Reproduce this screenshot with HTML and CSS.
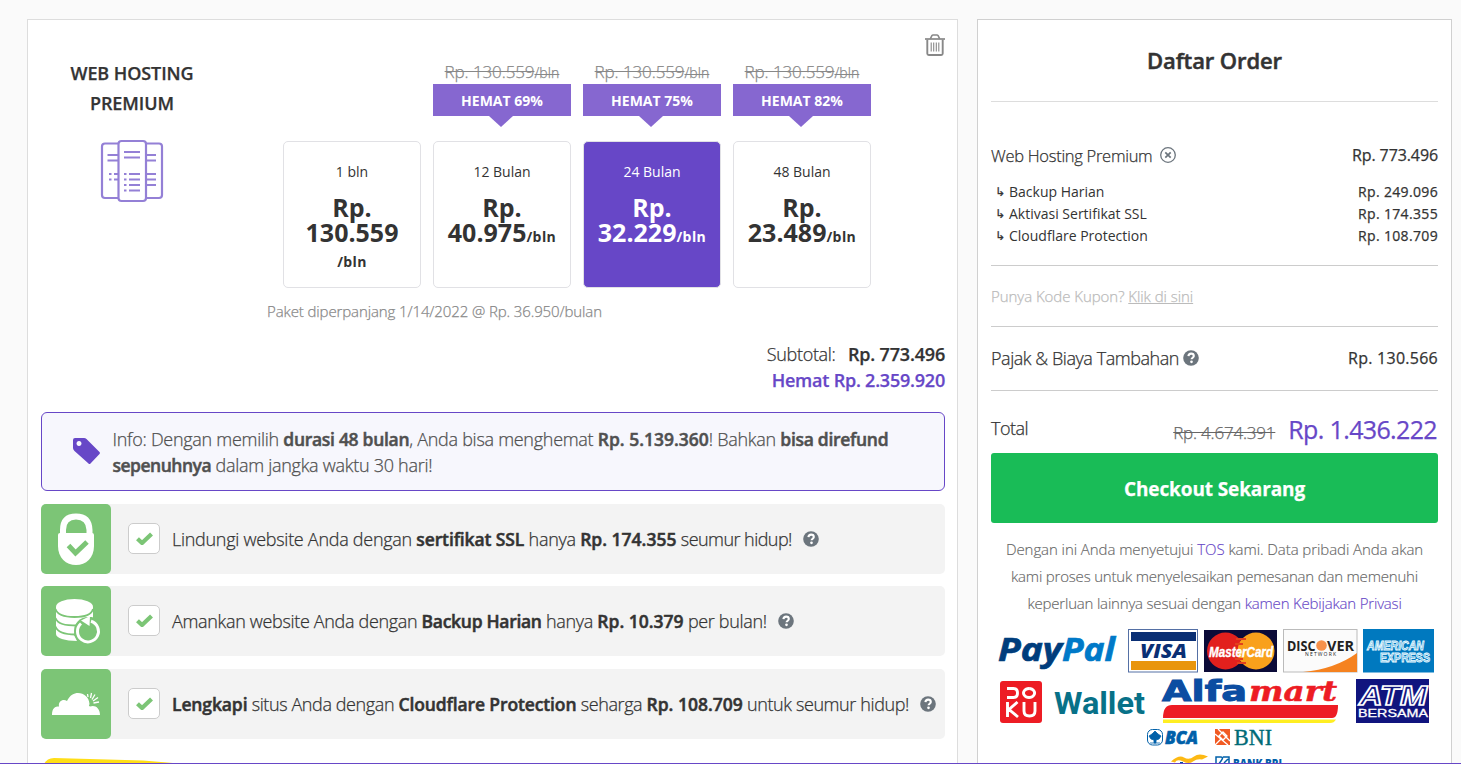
FILE: index.html
```
<!DOCTYPE html>
<html lang="id">
<head>
<meta charset="utf-8">
<title>Daftar Order</title>
<link rel="stylesheet" href="styles.css">
</head>
<body>
<svg class="defs" aria-hidden="true">
  <symbol id="help" viewBox="0 0 16 16"><circle cx="8" cy="8" r="7.8" fill="#6c757d"/><path d="M5.400 6.200C5.600 4.300 6.700 3.600 8.100 3.600c1.500 0 2.700.9 2.700 2.300 0 1.700-2.200 1.900-2.200 3.400" fill="none" stroke="#fff" stroke-width="2.100"/><circle cx="8.500" cy="11.800" r="1.350" fill="#fff"/></symbol>
  <symbol id="check" viewBox="0 0 16 12"><path d="M1.400 6.200l4.300 4L14.600 1.800" fill="none" stroke="#7cc576" stroke-width="4"/></symbol>
</svg>
<main class="page">
  <section class="card product">
    <div class="top">
      <div class="name">
        <h2>WEB HOSTING<br><span>PREMIUM</span></h2>
        <svg width="64" height="64" viewBox="0 0 64 64" fill="none" stroke="#9480d6" stroke-width="2.200">
          <path d="M18 4.500H5Q2 4.500 2 7.500V56q0 3 3 3H18M46 4.500H59q3 0 3 3V56q0 3-3 3H46"/>
          <rect x="18.500" y="2" width="27.500" height="60" rx="3"/>
          <path d="M24 13h16M24 18.500h16M7.500 16H18M7.500 21.500H18M46 16h10M46 21.500h10M29 35h11M29 40.500h11M29 46h11M29 51.500h11M46 35h10M46 40.500h10M46 46h10M14 35h4M14 40.500h4M9 35h2.500M9 40.500h2.500M24 35h2.500M24 40.500h2.500M24 46h2.500M24 51.500h2.500"/>
        </svg>
      </div>
      <div class="periods">
        <div class="plans">
          <div class="plan">
            <div class="box"><p>1 bln</p><b>Rp.<br>130.559<br><small>/bln</small></b></div>
          </div>
          <div class="plan">
            <s>Rp. 130.559<small>/bln</small></s>
            <div class="save">HEMAT 69%</div>
            <div class="box"><p>12 Bulan</p><b>Rp.<br>40.975<small>/bln</small></b></div>
          </div>
          <div class="plan">
            <s>Rp. 130.559<small>/bln</small></s>
            <div class="save">HEMAT 75%</div>
            <div class="box selected"><p>24 Bulan</p><b>Rp.<br>32.229<small>/bln</small></b></div>
          </div>
          <div class="plan">
            <s>Rp. 130.559<small>/bln</small></s>
            <div class="save">HEMAT 82%</div>
            <div class="box"><p>48 Bulan</p><b>Rp.<br>23.489<small>/bln</small></b></div>
          </div>
        </div>
        <p class="renew">Paket diperpanjang 1/14/2022 @ Rp. 36.950/bulan</p>
      </div>
      <svg class="trash" width="20" height="22" viewBox="0 0 20 22" fill="none" stroke="#888">
        <path d="M0 5h20" stroke-width="1.700"/><path d="M5.300 4.800L7 1.500Q7.400 1 8 1h4q.6 0 1 .5l1.700 3.300" stroke-width="1.600"/>
        <path d="M2.300 5.500V19.500Q2.300 21 3.800 21H16.200q1.500 0 1.500-1.500V5.500" stroke-width="1.900"/><path d="M6.200 8.500v9M8.700 8.500v9M11.300 8.500v9M13.800 8.500v9" stroke-width="1.100"/>
      </svg>
    </div>
    <div class="subtotal">
      <p>Subtotal: <b>Rp. 773.496</b></p>
      <p class="saved">Hemat Rp. 2.359.920</p>
    </div>
    <div class="info">
      <svg width="28" height="28" viewBox="0 0 28 28"><path fill="#6747c7" fill-rule="evenodd" d="M0 3Q0 1 2 1H11q1.500 0 2.500 1L26.500 15q1 1 0 2L17.500 26.500q-1 1-2 0L1.500 14Q0 12.500 0 11zM6 4a2.500 2.500 0 1 0 .01 0z"/></svg>
      <p>Info: Dengan memilih <b>durasi 48 bulan</b>, Anda bisa menghemat <b class="num">Rp. 5.139.360</b>! Bahkan <b>bisa direfund</b><br><b class="tight">sepenuhnya</b> dalam jangka waktu 30 hari!</p>
    </div>
    <div class="addons">
      <div class="addon">
        <div class="tile"><svg width="70" height="70" viewBox="0 0 70 70"><path d="M22 30V26Q22 12.500 35 12.500T48.500 26v4" fill="none" stroke="#fff" stroke-width="6"/><path d="M19 29h32q2 0 2 2V42c0 12-8 19-18 19S17 54 17 42V31q0-2 2-2z" fill="#fff"/><path d="M27.500 41.500l7 7.500L46 38" fill="none" stroke="#7cc576" stroke-width="5"/></svg></div>
        <span class="cb"><svg width="17" height="13"><use href="#check"/></svg></span>
        <p>Lindungi website Anda dengan <b class="wide">sertifikat SSL</b> hanya <b class="num">Rp. 174.355</b> <span class="close">seumur hidup!</span></p>
        <svg class="help" width="16" height="16"><use href="#help"/></svg>
      </div>
      <div class="addon">
        <div class="tile"><svg width="70" height="70" viewBox="0 0 70 70"><path d="M15 21V48c0 4 9 7 21 7l-3-6 2-11 12-7 5 0V21z" fill="#fff"/><ellipse cx="33.500" cy="21" rx="18.500" ry="8" fill="#fff"/><path d="M14.500 23c2 6.500 10 8 19 8s17-1.500 18.500-8M14.500 32c2 6 9 7.500 22 7.500M14.500 40.500c2 6 9 8 20 8" fill="none" stroke="#7cc576" stroke-width="1.800"/><circle cx="47" cy="45" r="14" fill="#7cc576"/><path d="M40 37.500A10.500 10.500 0 1 0 50 35.300" fill="none" stroke="#fff" stroke-width="3"/><path d="M40 34.500l9-4.500-.5 10z" fill="#fff"/><path d="M48 29.500l4-2v4z" fill="#fff"/></svg></div>
        <span class="cb"><svg width="17" height="13"><use href="#check"/></svg></span>
        <p class="snug">Amankan website Anda dengan <b>Backup Harian</b> hanya <b class="num">Rp. 10.379</b> per bulan!</p>
        <svg class="help" width="16" height="16"><use href="#help"/></svg>
      </div>
      <div class="addon">
        <div class="tile"><svg width="70" height="70" viewBox="0 0 70 70"><path fill="#fff" d="M11 46c0-7 3-8.500 7-8.500-1-5 4-8 8-5.500C29 26 33 24 37 24c6 0 11 4 11.500 11-.5 1.500-1 2 .5 2.500 5-2 10 1.500 10 8.500z"/><path d="M47 28l-.5-3M49.500 29l1-5M51 30.500l3-5M52 32l5-3.500M52.500 34l5.500-1" stroke="#fff" stroke-width="1.300"/></svg></div>
        <span class="cb"><svg width="17" height="13"><use href="#check"/></svg></span>
        <p class="snugger"><b class="wide">Lengkapi</b> situs Anda dengan <b class="wide">Cloudflare Protection</b> seharga <b class="num">Rp. 108.709</b> untuk seumur hidup!</p>
        <svg class="help" width="16" height="16"><use href="#help"/></svg>
      </div>
    </div>
    <svg class="promo" width="160" height="30" viewBox="0 0 160 30"><path fill="#ffde17" d="M0 8Q3 0 11 0L100 2.500 130 5 160 8V30H0z"/></svg>
  </section>

  <aside class="card order">
    <h1>Daftar Order</h1>
    <div class="items">
      <div class="row item"><span>Web Hosting Premium</span><svg width="16" height="16" viewBox="0 0 16 16" fill="none" stroke="#6c757d"><circle cx="8" cy="8" r="7.300" stroke-width="1.300"/><path d="M5.300 5.300l5.400 5.400M10.700 5.300l-5.400 5.400" stroke-width="1.700"/></svg><b>Rp. 773.496</b></div>
      <div class="subs">
        <div class="row"><i>↳</i><span>Backup Harian</span><b>Rp. 249.096</b></div>
        <div class="row"><i>↳</i><span>Aktivasi Sertifikat SSL</span><b>Rp. 174.355</b></div>
        <div class="row"><i>↳</i><span>Cloudflare Protection</span><b>Rp. 108.709</b></div>
      </div>
    </div>
    <div class="row coupon"><span>Punya Kode Kupon? <u>Klik di sini</u></span></div>
    <div class="row tax"><span>Pajak &amp; Biaya Tambahan</span><svg width="16" height="16"><use href="#help"/></svg><b>Rp. 130.566</b></div>
    <div class="total"><span>Total</span><s>Rp. 4.674.391</s><strong>Rp. 1.436.222</strong></div>
    <button class="checkout">Checkout Sekarang</button>
    <p class="tos"><span>Dengan ini Anda menyetujui <a>TOS</a> kami. Data pribadi Anda akan</span><br>kami proses untuk menyelesaikan pemesanan dan memenuhi<br>keperluan lainnya sesuai dengan <a>kamen Kebijakan Privasi</a></p>
    <svg class="pay" width="447" height="145" viewBox="991 627 447 145">
      <defs><clipPath id="mc"><rect x="1204" y="630" width="73" height="42"/></clipPath></defs>
      <g font-family="Open Sans, sans-serif" font-weight="700" font-style="italic" stroke-width=".7">
        <text x="998" y="661" font-size="33" fill="#003d7c" stroke="#003d7c" textLength="64" lengthAdjust="spacingAndGlyphs">Pay</text>
        <text x="1062" y="661" font-size="33" fill="#0079c8" stroke="#0079c8" textLength="53" lengthAdjust="spacingAndGlyphs">Pal</text>
      </g>
      <rect x="1128.500" y="629.500" width="69" height="42.500" fill="#fff" stroke="#5570a5"/>
      <rect x="1131" y="632" width="65" height="9" fill="#0a2f74"/><rect x="1131" y="661" width="65" height="9" fill="#e9950c"/>
      <text x="1140" y="658" font-family="Open Sans, sans-serif" font-weight="800" font-style="italic" font-size="20" fill="#0a2f74" textLength="47" lengthAdjust="spacingAndGlyphs">VISA</text>
      <rect x="1204" y="630" width="73" height="42" fill="#0b0b38"/>
      <g clip-path="url(#mc)"><circle cx="1225.500" cy="651" r="18.500" fill="#e2201d"/><circle cx="1256" cy="651" r="18.500" fill="#f9a01b"/><path d="M1236 639h10M1235 644h8M1235 659h8M1237 663h9" stroke="#e2401d" stroke-width="2"/></g>
      <text x="1209" y="657" font-family="Liberation Sans, sans-serif" font-weight="700" font-style="italic" font-size="14" fill="#fff" stroke="#fff" stroke-width=".4" textLength="64" lengthAdjust="spacingAndGlyphs">MasterCard</text>
      <rect x="1283.500" y="629.500" width="73.500" height="42.500" fill="#fbfbfb" stroke="#bbb"/>
      <path d="M1303 672Q1335 669 1357 653V672z" fill="#f58220"/>
      <circle cx="1321.500" cy="645.500" r="5.300" fill="#f7914a"/>
      <g font-family="Open Sans, sans-serif" font-weight="700" fill="#222"><text x="1287" y="650.500" font-size="14.500" textLength="28.500" lengthAdjust="spacingAndGlyphs">DISC</text><text x="1327" y="650.500" font-size="14.500" textLength="27" lengthAdjust="spacingAndGlyphs">VER</text><text x="1305" y="656" font-size="5" font-weight="400" textLength="31">NETWORK</text></g>
      <rect x="1363" y="629" width="71" height="43.500" fill="#0079bf"/>
      <g font-family="Liberation Sans, sans-serif" font-weight="700" font-size="12" fill="#58b4e2" stroke="#eefaff" stroke-width=".8"><text x="1367" y="650" font-style="italic" textLength="57" lengthAdjust="spacingAndGlyphs">AMERICAN</text><text x="1380" y="662" textLength="50" lengthAdjust="spacingAndGlyphs">EXPRESS</text></g>
      <rect x="1000" y="681" width="42" height="42" rx="3" fill="#ed1c24"/>
      <path d="M1007 688.500h6.500q4 0 4 4.500t-4 4.500h-6.500M1029 688.500a5.500 4.500 0 1 0 .1 0M1007.500 702v15M1017.500 702l-8.500 7.500 9 7.500M1024 702v9q0 5 5.500 5t5.500-5V702" fill="none" stroke="#fff" stroke-width="2.900"/>
      <text x="1054" y="714" font-family="Roboto, sans-serif" font-weight="700" font-size="32" fill="#087188" textLength="91" lengthAdjust="spacingAndGlyphs">Wallet</text>
      <g font-family="DejaVu Sans, sans-serif" font-weight="700"><text x="1162" y="700.500" font-size="28" fill="#0b4da2" stroke="#0b4da2" textLength="85" lengthAdjust="spacingAndGlyphs">Alfa</text><text x="1249" y="700.500" font-size="28" font-family="DejaVu Serif, serif" font-style="italic" fill="#ed1c24" stroke="#ed1c24" stroke-width=".5" textLength="88" lengthAdjust="spacingAndGlyphs">mart</text></g>
      <path d="M1163 718q0-13 9-13H1338q0 13-6 13z" fill="#ed1c24"/><path d="M1163 719.500H1336q-2 3.500-6 3.500H1163z" fill="#ffee22"/>
      <rect x="1356" y="679" width="73" height="44" fill="#10147e"/>
      <text x="1359" y="705" font-family="Liberation Sans, sans-serif" font-weight="700" font-style="italic" font-size="27" fill="#10147e" stroke="#fff" stroke-width="1.600" textLength="68" lengthAdjust="spacingAndGlyphs">ATM</text>
      <text x="1358" y="717" font-family="Liberation Sans, sans-serif" font-size="11.500" fill="#fff" stroke="#fff" stroke-width=".3" textLength="70" lengthAdjust="spacingAndGlyphs">BERSAMA</text>
      <rect x="1147.500" y="729.500" width="15" height="15.500" rx="5" fill="#fff" stroke="#0060a9"/><path d="M1155 731l3 3 3 2-2 3-3 1v3h-2v-3l-3-1-2-3 3-2zM1150 743h10" fill="#0060a9" stroke="#0060a9" stroke-width=".8"/>
      <text x="1165" y="744" font-family="Open Sans, sans-serif" font-weight="800" font-style="italic" font-size="18" fill="#0060a9" stroke="#0060a9" stroke-width=".6" textLength="33" lengthAdjust="spacingAndGlyphs">BCA</text>
      <rect x="1215" y="729" width="15" height="16" fill="#f15a23"/><path d="M1215 734l13 11M1218 729l12 12M1215 745l6-6M1223 732l4 4-4 4-4-4z" fill="none" stroke="#fff" stroke-width="1.300"/>
      <text x="1234" y="744.500" font-family="Liberation Serif, serif" font-size="23" fill="#006b77" stroke="#006b77" stroke-width=".4" textLength="38" lengthAdjust="spacingAndGlyphs">BNI</text>
      <path d="M1171 761.500q8-7 13-4t10-1 14 0l-6 3q-5-1-9 2t-10 0-8 1z" fill="#fdb913"/><path d="M1180 762h3v3h-3z" fill="#00529b"/>
      <path d="M1216 765v-8h5q3 0 0 4l-3 4M1223 757h6v8M1224 763l4-4" fill="none" stroke="#0060a9" stroke-width="1.500"/>
      <text x="1233" y="768" font-family="Open Sans, sans-serif" font-weight="800" font-size="11.500" fill="#0060a9" textLength="49" lengthAdjust="spacingAndGlyphs">BANK BRI</text>
    </svg>
  </aside>
</main>
<div class="edge"></div>
</body>
</html>
```
FILE: styles.css
```
*{box-sizing:border-box}
body{margin:0;height:764px;overflow:hidden;background:#fafafa;color:#333;font-family:"Open Sans","Noto Sans",sans-serif;font-weight:300;-webkit-text-stroke:.25px}
p,h1,h2{margin:0}
svg{display:block;flex:none;-webkit-text-stroke:0}
.defs{position:absolute;width:0;height:0}
.page{display:grid;grid-template-columns:931px 475px;gap:19px;padding:19px 0 0 27px;height:764px}
.card{background:#fff;border:1px solid #ddd;border-bottom:0;padding:0 13px;overflow:hidden;height:745px}
.product{padding-right:12px}
.order{border-color:#d0d0d0}
.edge{position:fixed;left:0;right:0;bottom:0;height:1px;background:#6747c7}

.top{display:flex;height:322px}
.name{width:182px;padding-top:38px;display:flex;flex-direction:column;align-items:center;gap:21px}
.name h2{font-size:18px;line-height:30px;font-weight:600;text-align:center;letter-spacing:-.09px}
.periods{flex:1;padding-left:60px;padding-top:40px}
.plans{display:grid;grid-template-columns:repeat(4,138px);gap:12px;height:228px}
.plan{display:flex;flex-direction:column;text-align:center}
.plan s{height:24px;font-size:17px;line-height:24px;color:#888;letter-spacing:-.1px}
.plan s small{font-size:14px;letter-spacing:.1px}
.save{position:relative;height:32px;background:#8667d0;color:#fff;font-size:14px;line-height:33px;font-weight:700;-webkit-text-stroke:0}
.save::after{content:"";position:absolute;left:56px;top:32px;border:solid transparent;border-width:11.500px 12.500px 0;border-top-color:#8667d0}
.box{margin-top:auto;height:147px;border:1px solid #e1e1e5;border-radius:5px;padding-top:19px;-webkit-text-stroke:0}
.box p{font-size:14px;line-height:22px;font-weight:400}
.box b{display:block;margin-top:12px;font-size:25px;line-height:25px;font-weight:700;white-space:nowrap}
.box small{font-size:14px;letter-spacing:.4px}
.selected{background:#6747c7;color:#fff}
.renew{margin:10px 0 0 -16px;font-size:15px;line-height:26px;color:#888;letter-spacing:-.11px;white-space:nowrap}
.trash{margin-top:14px}

.subtotal{margin-top:-1px;text-align:right;font-size:18px;line-height:26px;letter-spacing:-.3px}
.subtotal b{font-weight:600;margin-left:8px;letter-spacing:-.18px}
.subtotal .saved{font-weight:600;color:#6747c7;letter-spacing:-.22px}
.info{margin-top:19px;height:79px;border:1px solid #6747c7;border-radius:6px;background:#f7f7fd;color:#505050;display:flex;padding:13px 0 0 31px;gap:11.500px}
.info svg{margin-top:11px}
.info p,.addon p{font-size:18px;line-height:26px;letter-spacing:-.28px;white-space:nowrap}
.info b,.addon b{font-size:17.500px;font-weight:600;letter-spacing:-.3px;-webkit-text-stroke:.5px}
.info .num,.addon .num{letter-spacing:0}
.info .tight{letter-spacing:-.5px}
.addon .wide{letter-spacing:-.12px}
.addon .snug{letter-spacing:-.33px}
.addon .snugger{letter-spacing:-.4px}
.close{letter-spacing:-.55px}
.addons{margin-top:13px}
.addon{height:70px;margin-bottom:12px;background:#f3f3f3;border-radius:5px;display:flex;align-items:center}
.addon:nth-child(2){margin-bottom:13px}
.tile{width:70px;height:70px;border-radius:5px;background:#7cc576}
.cb{width:32px;height:31px;margin:-2px 12px 0 17px;border:1px solid #ccc;border-radius:5px;background:#fff;display:grid;place-items:center}
.help{margin-left:11px}
.promo{margin:19px 0 0 2px}

.order h1{height:82px;line-height:80px;border-bottom:1px solid #ddd;font-size:22px;font-weight:600;text-align:center;letter-spacing:-.1px;-webkit-text-stroke:.5px}
.row{display:flex;align-items:center}
.row b{margin-left:auto;font-weight:500}
.items{height:164px;padding-top:41px;border-bottom:1px solid #ccc}
.item{height:24px;font-size:16.500px;letter-spacing:-.28px}
.item b{font-size:16px;letter-spacing:-.1px}
.item svg{margin-left:8px}
.subs{margin-top:13px;font-size:14px;-webkit-text-stroke:0}
.subs .row{height:22px;font-weight:400}
.subs i{width:18px;padding:2px 0 0 4px;font:12px "DejaVu Sans",sans-serif;-webkit-text-stroke:.3px}
.subs b{letter-spacing:.34px;-webkit-text-stroke:.25px}
.coupon{height:61px;border-bottom:1px solid #ccc;font-size:15px;letter-spacing:-.05px;color:#bbb}
.tax{height:64px;padding-bottom:1px;border-bottom:1px solid #ccc;font-size:18px;letter-spacing:-.45px}
.tax svg{margin-left:4px}
.tax b{font-size:16px;letter-spacing:.26px}
.total{height:62px;display:flex;align-items:center;padding-top:16px}
.total span{font-size:18px;letter-spacing:-.5px;margin-bottom:4px}
.total s{margin:0 13px -4px auto;font-size:17px;letter-spacing:-.2px;color:#666}
.total strong{margin:0 1px 2px 0;font-size:25px;font-weight:500;color:#6747c7;letter-spacing:-.64px}
.checkout{display:block;width:447px;height:70px;border:0;border-radius:3px;background:#19bc57;color:#fff;font:700 19px "Open Sans",sans-serif;letter-spacing:-.12px;padding:2px 0 0}
.tos{margin:13px 0 10px;text-align:center;font-size:15px;line-height:27px;letter-spacing:-.19px;color:#666;white-space:nowrap;-webkit-text-stroke:.15px}
.tos span{letter-spacing:-.07px}
.tos a{color:#6747c7}
```
